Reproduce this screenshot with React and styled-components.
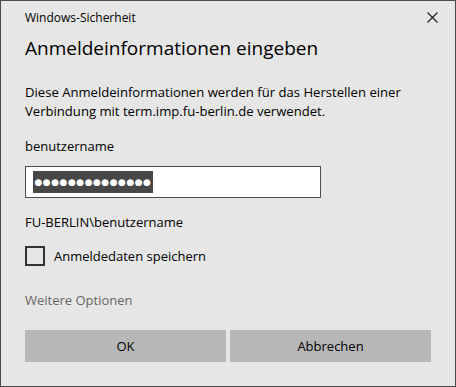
import React from 'react';
import styled, { createGlobalStyle } from 'styled-components';

const GlobalStyle = createGlobalStyle`
  html, body {
    margin: 0;
    padding: 0;
    background: #e6e6e6;
  }
  * {
    box-sizing: border-box;
  }
`;

const App = () => {
  return (
    <>
      <GlobalStyle />
      <Dialog>
        <TitleBar>
          <WindowTitle>Windows-Sicherheit</WindowTitle>
          <CloseButton aria-label="Schließen">
            <svg width="11" height="11" viewBox="0 0 11 11">
              <path d="M0.5 0.5 L10.5 10.5 M10.5 0.5 L0.5 10.5" stroke="#1a1a1a" strokeWidth="1.1" fill="none" />
            </svg>
          </CloseButton>
        </TitleBar>
        <Heading>Anmeldeinformationen eingeben</Heading>
        <Description>
          Diese Anmeldeinformationen werden für das Herstellen einer
          <br />
          Verbindung mit term.imp.fu-berlin.de verwendet.
        </Description>
        <Label>benutzername</Label>
        <PasswordBox>
          <Selection>{'\u25CF'.repeat(14)}</Selection>
        </PasswordBox>
        <Domain>FU-BERLIN\benutzername</Domain>
        <CheckRow>
          <CheckBox />
          <CheckLabel>Anmeldedaten speichern</CheckLabel>
        </CheckRow>
        <MoreOptions>Weitere Optionen</MoreOptions>
        <ButtonRow>
          <DialogButton>OK</DialogButton>
          <DialogButton>Abbrechen</DialogButton>
        </ButtonRow>
      </Dialog>
    </>
  );
};

const Dialog = styled.div`
  width: 456px;
  height: 387px;
  border: 1px solid #4a4a4a;
  background: #e6e6e6;
  padding: 0 24px;
  display: flex;
  flex-direction: column;
  font-family: 'Open Sans', 'Noto Sans', sans-serif;
  color: #000;
`;

const TitleBar = styled.div`
  height: 33px;
  display: flex;
  align-items: center;
  justify-content: space-between;
`;

const WindowTitle = styled.div`
  font-size: 12px;
  color: #000;
`;

const CloseButton = styled.div`
  width: 11px;
  height: 11px;
  margin-right: -7px;
  display: flex;
`;

const Heading = styled.h1`
  margin: 0;
  font-size: 19px;
  font-weight: 400;
  line-height: 28px;
`;

const Description = styled.p`
  margin: 21px 0 0;
  font-size: 13.1px;
  line-height: 19px;
`;

const Label = styled.div`
  margin-top: 16px;
  font-size: 13px;
  line-height: 19px;
`;

const PasswordBox = styled.div`
  margin-top: 10px;
  width: 296px;
  height: 32px;
  border: 1px solid #4d4d4d;
  background: #fff;
  display: flex;
  align-items: center;
  padding-left: 7px;
`;

const Selection = styled.span`
  background: #474747;
  color: #fff;
  height: 22px;
  width: 120px;
  display: flex;
  align-items: center;
  justify-content: center;
  font-size: 9px;
  letter-spacing: 0.5px;
  font-family: 'DejaVu Sans', sans-serif;
`;

const Domain = styled.div`
  margin-top: 15px;
  font-size: 13px;
  line-height: 19px;
`;

const CheckRow = styled.div`
  margin-top: 14px;
  display: flex;
  align-items: center;
  gap: 9px;
`;

const CheckBox = styled.div`
  width: 20px;
  height: 20px;
  border: 2px solid #333;
`;

const CheckLabel = styled.span`
  font-size: 13px;
`;

const MoreOptions = styled.div`
  margin-top: 25px;
  font-size: 13px;
  line-height: 19px;
  color: #666;
`;

const ButtonRow = styled.div`
  margin-top: 20px;
  display: flex;
  gap: 4px;
`;

const DialogButton = styled.div`
  width: 201px;
  height: 32px;
  background: #b7b7b7;
  display: flex;
  align-items: center;
  justify-content: center;
  font-size: 13px;
`;

export default App;
